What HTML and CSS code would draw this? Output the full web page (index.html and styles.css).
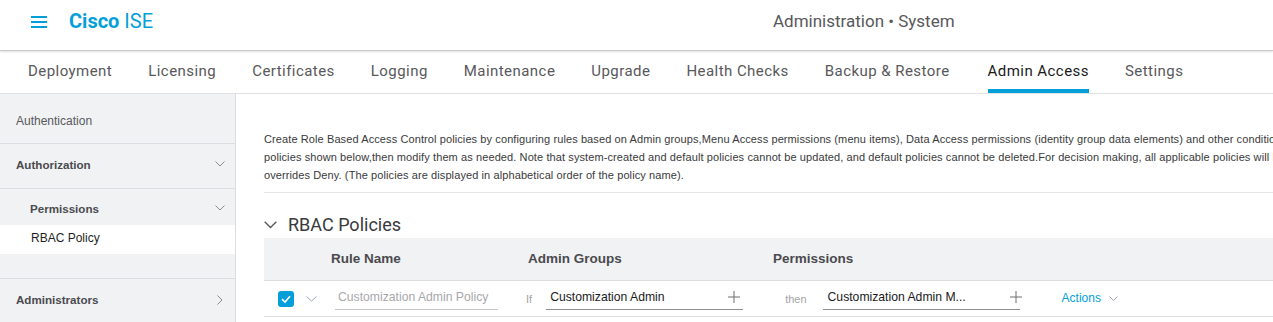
FILE: index.html
```html
<!DOCTYPE html>
<html>
<head>
<meta charset="utf-8">
<link rel="stylesheet" href="styles.css">
</head>
<body>
<header class="topbar">
  <div class="brand">
    <svg class="burger" width="16" height="12" viewBox="0 0 16 12"><rect x="0" y="0" width="16" height="2" fill="#049fd9"/><rect x="0" y="5" width="16" height="2" fill="#049fd9"/><rect x="0" y="10" width="16" height="2" fill="#049fd9"/></svg>
    <span class="logo"><b>Cisco</b> ISE</span>
  </div>
  <div class="title">Administration • System</div>
</header>
<nav class="tabs">
  <span class="tab">Deployment</span>
  <span class="tab">Licensing</span>
  <span class="tab">Certificates</span>
  <span class="tab">Logging</span>
  <span class="tab">Maintenance</span>
  <span class="tab">Upgrade</span>
  <span class="tab">Health Checks</span>
  <span class="tab">Backup &amp; Restore</span>
  <span class="tab active">Admin Access</span>
  <span class="tab">Settings</span>
</nav>
<div class="body">
  <aside class="side">
    <div class="side-item first">Authentication</div>
    <div class="side-item bold">Authorization
      <svg class="chev" width="10" height="6" viewBox="0 0 10 6"><path d="M0.5 0.5 L5 5 L9.5 0.5" fill="none" stroke="#8a8c90" stroke-width="1"/></svg>
    </div>
    <div class="side-item sub bold">Permissions
      <svg class="chev" width="10" height="6" viewBox="0 0 10 6"><path d="M0.5 0.5 L5 5 L9.5 0.5" fill="none" stroke="#8a8c90" stroke-width="1"/></svg>
    </div>
    <div class="side-item sub selected">RBAC Policy</div>
    <div class="side-gap"></div>
    <div class="side-item bold last">Administrators
      <svg class="chev" width="6" height="10" viewBox="0 0 6 10"><path d="M0.5 0.5 L5 5 L0.5 9.5" fill="none" stroke="#8a8c90" stroke-width="1"/></svg>
    </div>
  </aside>
  <main class="main">
    <div class="desc">
      <div class="line">Create Role Based Access Control policies by configuring rules based on Admin groups,Menu Access permissions (menu items), Data Access permissions (identity group data elements) and other conditions. Multiple Menu/Data Access permissions are not allowed on a single policy. You can copy the default</div>
      <div class="line">policies shown below,then modify them as needed. Note that system-created and default policies cannot be updated, and default policies cannot be deleted.For decision making, all applicable policies will be evaluated. The subject's permissions will be the aggregate of all permissions from each applicable policy. Permit</div>
      <div class="line">overrides Deny. (The policies are displayed in alphabetical order of the policy name).</div>
    </div>
    <div class="section-title">
      <svg width="13" height="8" viewBox="0 0 13 8"><path d="M0.7 0.7 L6.5 6.5 L12.3 0.7" fill="none" stroke="#58585b" stroke-width="1.4"/></svg>
      <span>RBAC Policies</span>
    </div>
    <div class="table">
      <div class="thead">
        <span class="th c-name">Rule Name</span>
        <span class="th c-groups">Admin Groups</span>
        <span class="th c-perm">Permissions</span>
      </div>
      <div class="row">
        <span class="check"><svg width="16" height="16" viewBox="0 0 16 16"><rect width="16" height="16" rx="3" fill="#049fd9"/><path d="M4 8.2 L7 11 L12 5.2" fill="none" stroke="#fff" stroke-width="1.6"/></svg></span>
        <span class="row-chev"><svg width="11" height="6" viewBox="0 0 11 6"><path d="M0.5 0.5 L5.5 5 L10.5 0.5" fill="none" stroke="#9ea6b4" stroke-width="1"/></svg></span>
        <span class="field name placeholder">Customization Admin Policy</span>
        <span class="kw if">If</span>
        <span class="field groups">Customization Admin<svg class="plus" width="12" height="12" viewBox="0 0 12 12"><path d="M6 0 V12 M0 6 H12" stroke="#6e6e73" stroke-width="1"/></svg></span>
        <span class="kw then">then</span>
        <span class="field perm">Customization Admin M...<svg class="plus" width="12" height="12" viewBox="0 0 12 12"><path d="M6 0 V12 M0 6 H12" stroke="#6e6e73" stroke-width="1"/></svg></span>
        <span class="actions">Actions<svg width="9" height="5" viewBox="0 0 9 5"><path d="M0.5 0.5 L4.5 4.5 L8.5 0.5" fill="none" stroke="#9ea6b4" stroke-width="1"/></svg></span>
      </div>
    </div>
  </main>
</div>
</body>
</html>
```
FILE: styles.css
```css
* { box-sizing: border-box; }
html, body { margin: 0; padding: 0; }
body {
  width: 1273px;
  height: 322px;
  overflow: hidden;
  background: #fff;
  font-family: "Liberation Sans", Arial, sans-serif;
  color: #39393b;
}
.topbar {
  height: 51px;
  display: flex;
  align-items: center;
  border-bottom: 1px solid #c8c9cc;
  box-shadow: 0 1px 2px rgba(0,0,0,0.12);
  position: relative;
}
.brand {
  display: flex;
  align-items: center;
  padding-left: 31px;
  width: 400px;
}
.burger { margin-top: -6px; }
.logo {
  margin-left: 22px;
  font-family: Roboto, "Liberation Sans", sans-serif;
  font-size: 20px;
  color: #049fd9;
  margin-top: -9px;
}
.logo b { font-weight: 700; }
.title {
  font-family: Roboto, "Liberation Sans", sans-serif;
  font-size: 17px;
  color: #58585b;
  margin-left: 373px;
  margin-top: -8px;
}
.tabs {
  height: 43px;
  display: flex;
  align-items: stretch;
  padding-left: 28px;
  border-bottom: 1px solid #dfe0e2;
  font-family: Roboto, "Liberation Sans", sans-serif;
  font-size: 15px;
  letter-spacing: 0.45px;
  color: #58585b;
}
.tab {
  display: flex;
  align-items: center;
  margin-right: 36px;
  padding-top: 1px;
  border-bottom: 4px solid transparent;
}
.tab.active {
  color: #1a1a1a;
  border-bottom-color: #049fd9;
  margin-left: 2px;
}
.body {
  display: flex;
  height: 228px;
}
.side {
  width: 236px;
  flex: none;
  background: #f1f2f4;
  border-right: 1px solid #dcdde0;
  font-size: 12px;
  color: #58585b;
}
.side-item {
  display: flex;
  align-items: center;
  justify-content: space-between;
  padding: 0 10px 0 16px;
  border-bottom: 1px solid #dcdde0;
}
.side-item.first { height: 50px; padding-top: 4px; }
.side-item.bold { font-weight: 700; font-size: 11.6px; color: #4a4a4e; height: 45px; padding-bottom: 4px; }
.side-item.sub { padding-left: 30px; border-bottom: none; height: 36px; }
.side-item.sub.bold { padding-top: 2px; padding-bottom: 0; }
.side-item.selected { background: #fff; color: #1f1f22; height: 29px; padding-left: 31px; padding-bottom: 3px; }
.side-item.last { border-bottom: none; height: 44px; padding-right: 12px; padding-bottom: 3px; }
.side-gap { height: 25px; border-bottom: 1px solid #dcdde0; }
.chev { flex: none; }
.main {
  flex: 1;
  min-width: 0;
  overflow: hidden;
  padding-left: 28px;
}
.desc {
  margin-top: 36px;
  padding-bottom: 8px;
  border-bottom: 1px solid #e3e4e6;
  font-size: 11px;
  line-height: 18px;
  letter-spacing: 0.1px;
  color: #39393b;
}
.line { white-space: nowrap; }
.section-title {
  display: flex;
  align-items: center;
  height: 45px;
  padding-top: 18px;
  font-family: Roboto, "Liberation Sans", sans-serif;
  font-size: 18px;
  color: #39393b;
}
.section-title svg { margin-right: 11px; margin-top: 1px; }
.table { width: 1100px; }
.thead {
  height: 43px;
  background: #f1f2f4;
  border-bottom: 1px solid #dcdde0;
  display: flex;
  align-items: center;
  font-size: 13.5px;
  font-weight: 700;
  color: #4a4a4e;
  padding-bottom: 2px;
}
.c-name { margin-left: 67px; width: 197px; }
.c-groups { width: 245px; }
.row {
  height: 36px;
  display: flex;
  align-items: center;
  border-bottom: 1px solid #dcdde0;
  font-size: 12.2px;
}
.check { margin-left: 14px; width: 16px; height: 16px; display: flex; }
.row-chev { margin-left: 12px; display: flex; margin-top: 1px; }
.field {
  display: flex;
  align-items: center;
  justify-content: space-between;
  height: 22px;
  border-bottom: 1px solid #8e8e93;
  color: #1a1a1a;
  padding: 0 3px 2px 4px;
}
.placeholder { color: #a7a7ab; border-bottom-color: #c3c4c7; }
.field.name { margin-left: 18px; width: 163px; padding-left: 3px; }
.kw { color: #a3a3a7; font-size: 11px; padding-top: 1px; }
.kw.if { margin-left: 28px; }
.field.groups { margin-left: 14px; width: 197px; }
.kw.then { margin-left: 42px; }
.field.perm { margin-left: 16px; width: 197px; padding-right: 0; padding-left: 5px; }
.field.perm .plus { margin-right: -2px; }
.plus { flex: none; }
.actions {
  margin-left: 42px;
  color: #049fd9;
  font-size: 12px;
  display: flex;
  align-items: center;
  padding-bottom: 1px;
}
.actions svg { margin-left: 8px; }
```
